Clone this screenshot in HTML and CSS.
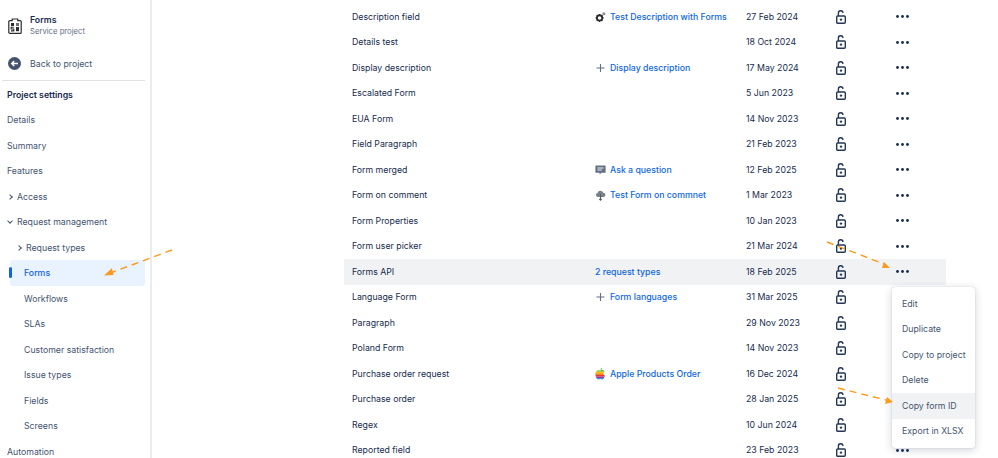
FILE: index.html
```html
<!DOCTYPE html>
<html lang="en">
<head>
  <meta charset="UTF-8" />
  <title>Forms - Project settings</title>
  <link rel="stylesheet" href="styles.css">
</head>
<body>
  <svg class="defs" width="0" height="0">
    <symbol id="lock" viewBox="0 0 10 14">
      <path d="M2.4 6V3.200a2.300 2.300 0 0 1 4.600-.3" fill="none" stroke="#253858" stroke-width="1.4"/>
      <rect x=".7" y="6" width="8.600" height="7.300" rx="1" fill="none" stroke="#253858" stroke-width="1.4"/>
      <circle cx="5" cy="9.600" r="1.200" fill="#253858"/>
    </symbol>
    <symbol id="dots" viewBox="0 0 13 3">
      <circle cx="1.500" cy="1.500" r="1.400" fill="#172b4d"/>
      <circle cx="6.500" cy="1.500" r="1.400" fill="#172b4d"/>
      <circle cx="11.500" cy="1.500" r="1.400" fill="#172b4d"/>
    </symbol>
    <symbol id="plus" viewBox="0 0 10 10">
      <path d="M5 1v8M1 5h8" stroke="#626f86" stroke-width="1.100" fill="none"/>
    </symbol>
    <clipPath id="apple-shape">
      <path d="M5.400 3.500C6.400 3 8.400 2.700 9.600 4.500 8 5.600 8.200 8 10 8.800 9.400 10.600 8.400 12.500 7.300 12.500 6.500 12.500 6.200 12 5.300 12 4.400 12 4 12.500 3.300 12.500 2 12.500.4 9.500.4 7.300.4 4.500 2.300 3 4 3.200 4.500 3.200 5 3.500 5.400 3.500z"/>
    </clipPath>
  </svg>

  <div class="page">
    <aside class="sidebar">
      <div class="project">
        <svg class="project-icon" width="14" height="16" viewBox="0 0 14 16">
          <path d="M1.800 2.600h2.400V1h5.600v1.600h2.400a1 1 0 0 1 1 1v10.800a1 1 0 0 1-1 1H1.800a1 1 0 0 1-1-1V3.600a1 1 0 0 1 1-1z" fill="#fff" stroke="#2c2c2c" stroke-width="1.200"/>
          <rect x="3" y="5" width="3" height="3" fill="#2c2c2c"/>
          <rect x="8" y="5" width="3" height="3" fill="#6b6f76"/>
          <path d="M5.800 9.200H3.200v1.800h2.600v1.900H3" fill="none" stroke="#2c2c2c" stroke-width="1.100"/>
          <rect x="8" y="9" width="3" height="4.200" fill="#2c2c2c"/>
        </svg>
        <div>
          <div class="project-name">Forms</div>
          <div class="project-type">Service project</div>
        </div>
      </div>
      <div class="back">
        <svg width="13" height="13" viewBox="0 0 13 13">
          <circle cx="6.500" cy="6.500" r="6.500" fill="#44546f"/>
          <path d="M10 6.500H4M6.200 4 3.700 6.500 6.200 9" fill="none" stroke="#fff" stroke-width="1.400"/>
        </svg>
        <span>Back to project</span>
      </div>
      <h4 class="nav-title">Project settings</h4>
      <nav class="nav">
        <div class="nav-item">Details</div>
        <div class="nav-item">Summary</div>
        <div class="nav-item">Features</div>
        <div class="nav-item toggle"><i class="chev"></i>Access</div>
        <div class="nav-item toggle"><i class="chev open"></i>Request management</div>
        <div class="nav-item toggle sub"><i class="chev"></i>Request types</div>
        <div class="nav-item child active">Forms</div>
        <div class="nav-item child">Workflows</div>
        <div class="nav-item child">SLAs</div>
        <div class="nav-item child">Customer satisfaction</div>
        <div class="nav-item child">Issue types</div>
        <div class="nav-item child">Fields</div>
        <div class="nav-item child">Screens</div>
        <div class="nav-item">Automation</div>
      </nav>
    </aside>

    <main class="content">
      <div class="row">
        <span>Description field</span>
        <a class="link"><svg class="type-icon" width="12" height="12" viewBox="0 0 12 12"><circle cx="5" cy="7" r="2.900" fill="none" stroke="#2c2c2c" stroke-width="2"/><path d="M5 2.600v1.400M5 10v1.400M.6 7H2M8 7h1.400M1.900 3.900l1 1M7.100 9.100l1 1M1.900 10.100l1-1M7.100 4.900l1-1" stroke="#2c2c2c" stroke-width="1.300"/><circle cx="9.700" cy="2.400" r="1.700" fill="#8a8f98"/></svg>Test Description with Forms</a>
        <span>27 Feb 2024</span>
        <svg class="lock"><use href="#lock"/></svg>
        <svg class="dots"><use href="#dots"/></svg>
      </div>
      <div class="row">
        <span>Details test</span>
        <span></span>
        <span>18 Oct 2024</span>
        <svg class="lock"><use href="#lock"/></svg>
        <svg class="dots"><use href="#dots"/></svg>
      </div>
      <div class="row">
        <span>Display description</span>
        <a class="link"><svg class="type-icon" width="10" height="10"><use href="#plus"/></svg>Display description</a>
        <span>17 May 2024</span>
        <svg class="lock"><use href="#lock"/></svg>
        <svg class="dots"><use href="#dots"/></svg>
      </div>
      <div class="row">
        <span>Escalated Form</span>
        <span></span>
        <span>5 Jun 2023</span>
        <svg class="lock"><use href="#lock"/></svg>
        <svg class="dots"><use href="#dots"/></svg>
      </div>
      <div class="row">
        <span>EUA Form</span>
        <span></span>
        <span>14 Nov 2023</span>
        <svg class="lock"><use href="#lock"/></svg>
        <svg class="dots"><use href="#dots"/></svg>
      </div>
      <div class="row">
        <span>Field Paragraph</span>
        <span></span>
        <span>21 Feb 2023</span>
        <svg class="lock"><use href="#lock"/></svg>
        <svg class="dots"><use href="#dots"/></svg>
      </div>
      <div class="row">
        <span>Form merged</span>
        <a class="link"><svg class="type-icon" width="11" height="10" viewBox="0 0 11 10"><path d="M1 .6h9a.6.6 0 0 1 .6.6v6a.6.6 0 0 1-.6.6H6.400L4.600 9.600V7.800H1a.6.6 0 0 1-.6-.6v-6A.6.6 0 0 1 1 .6z" fill="#626f86"/><path d="M2.400 3h6.200M2.400 5h4.400" stroke="#fff" stroke-width=".9"/></svg>Ask a question</a>
        <span>12 Feb 2025</span>
        <svg class="lock"><use href="#lock"/></svg>
        <svg class="dots"><use href="#dots"/></svg>
      </div>
      <div class="row">
        <span>Form on comment</span>
        <a class="link"><svg class="type-icon" width="12" height="11" viewBox="0 0 12 11"><path d="M3 7.200a2.300 2.300 0 0 1-.3-4.500A3.400 3.400 0 0 1 9 2.400a2.400 2.400 0 0 1 0 4.800z" fill="#7a808a"/><path d="M6 4.500V10.600M4.600 9.200 6 10.600l1.400-1.400" fill="none" stroke="#55595f" stroke-width="1.100"/></svg>Test Form on commnet</a>
        <span>1 Mar 2023</span>
        <svg class="lock"><use href="#lock"/></svg>
        <svg class="dots"><use href="#dots"/></svg>
      </div>
      <div class="row">
        <span>Form Properties</span>
        <span></span>
        <span>10 Jan 2023</span>
        <svg class="lock"><use href="#lock"/></svg>
        <svg class="dots"><use href="#dots"/></svg>
      </div>
      <div class="row">
        <span>Form user picker</span>
        <span></span>
        <span>21 Mar 2024</span>
        <svg class="lock"><use href="#lock"/></svg>
        <svg class="dots"><use href="#dots"/></svg>
      </div>
      <div class="row selected">
        <span>Forms API</span>
        <a class="link plain">2 request types</a>
        <span>18 Feb 2025</span>
        <svg class="lock"><use href="#lock"/></svg>
        <svg class="dots"><use href="#dots"/></svg>
      </div>
      <div class="row">
        <span>Language Form</span>
        <a class="link"><svg class="type-icon" width="10" height="10"><use href="#plus"/></svg>Form languages</a>
        <span>31 Mar 2025</span>
        <svg class="lock"><use href="#lock"/></svg>
        <svg class="dots"><use href="#dots"/></svg>
      </div>
      <div class="row">
        <span>Paragraph</span>
        <span></span>
        <span>29 Nov 2023</span>
        <svg class="lock"><use href="#lock"/></svg>
        <svg class="dots"><use href="#dots"/></svg>
      </div>
      <div class="row">
        <span>Poland Form</span>
        <span></span>
        <span>14 Nov 2023</span>
        <svg class="lock"><use href="#lock"/></svg>
        <svg class="dots"><use href="#dots"/></svg>
      </div>
      <div class="row">
        <span>Purchase order request</span>
        <a class="link"><svg class="type-icon" width="11" height="13" viewBox="0 0 11 13"><path d="M5.300 3Q5.500 1 7.400.5 7.300 2.600 5.300 3z" fill="#5ebd3e"/><g clip-path="url(#apple-shape)"><rect y="2" width="11" height="2.700" fill="#5ebd3e"/><rect y="4.700" width="11" height="1.600" fill="#ffb900"/><rect y="6.300" width="11" height="1.600" fill="#f78200"/><rect y="7.900" width="11" height="1.600" fill="#e23838"/><rect y="9.500" width="11" height="1.500" fill="#973999"/><rect y="11" width="11" height="2" fill="#3f8fe0"/></g></svg>Apple Products Order</a>
        <span>16 Dec 2024</span>
        <svg class="lock"><use href="#lock"/></svg>
        <svg class="dots"><use href="#dots"/></svg>
      </div>
      <div class="row">
        <span>Purchase order</span>
        <span></span>
        <span>28 Jan 2025</span>
        <svg class="lock"><use href="#lock"/></svg>
        <svg class="dots"><use href="#dots"/></svg>
      </div>
      <div class="row">
        <span>Regex</span>
        <span></span>
        <span>10 Jun 2024</span>
        <svg class="lock"><use href="#lock"/></svg>
        <svg class="dots"><use href="#dots"/></svg>
      </div>
      <div class="row">
        <span>Reported field</span>
        <span></span>
        <span>23 Feb 2023</span>
        <svg class="lock"><use href="#lock"/></svg>
        <svg class="dots"><use href="#dots"/></svg>
      </div>
    </main>

    <div class="menu">
      <div class="menu-item">Edit</div>
      <div class="menu-item">Duplicate</div>
      <div class="menu-item">Copy to project</div>
      <div class="menu-item">Delete</div>
      <div class="menu-item hover">Copy form ID</div>
      <div class="menu-item">Export in XLSX</div>
    </div>

    <!-- hand drawn annotation arrows -->
    <svg class="arrows" width="998" height="458" viewBox="0 0 998 458">
      <g fill="none" stroke="#fb9a1c" stroke-width="1.400" stroke-dasharray="7 5">
        <path d="M172 250 113 272"/>
        <path d="M827 242 884 264"/>
        <path d="M838 388 886 400"/>
      </g>
      <g fill="#fb9a1c">
        <path d="M104 275.500 112 268 113.500 275z"/>
        <path d="M890 268 882 268 884 262z"/>
        <path d="M893 402 885 404 887 397z"/>
      </g>
    </svg>
  </div>
</body>
</html>
```

FILE: styles.css
```css
* {
  box-sizing: border-box;
}
html, body {
  margin: 0;
  height: 458px;
  overflow: hidden;
  background: #fff;
}
body {
  font-family: Inter, "Liberation Sans", sans-serif;
  font-size: 8.75px;
  color: #172b4d;
}
.defs {
  position: absolute;
}
.page {
  position: relative;
  display: flex;
  height: 458px;
  overflow: hidden;
}

/* sidebar */
.sidebar {
  flex: 0 0 152px;
  height: 458px;
  padding: 0 5px 0 2px;
  border-right: 2px solid #ebecf0;
  color: #44546f;
}
.project {
  display: flex;
  align-items: center;
  gap: 8px;
  height: 26px;
  margin-top: 13px;
  padding-left: 6px;
}
.project-icon {
  flex: none;
}
.project-name {
  font-weight: 600;
  color: #172b4d;
  line-height: 11px;
}
.project-type {
  font-size: 7.7px;
  line-height: 11px;
  color: #626f86;
}
.back {
  display: flex;
  align-items: center;
  gap: 9px;
  height: 26px;
  margin-top: 12px;
  padding-left: 6px;
  padding-bottom: 1px;
}
.nav-title {
  margin: 3px 0 0;
  padding: 8px 0 0 5px;
  height: 27px;
  border-top: 1px solid #dfe1e6;
  font-size: 8.75px;
  font-weight: 600;
  line-height: 12px;
  color: #172b4d;
}
.nav-item {
  display: flex;
  align-items: center;
  height: 25.5px;
  padding-top: 1px;
  padding-left: 5px;
}
.nav-item.toggle {
  padding-left: 6px;
}
.nav-item.sub {
  padding-left: 15px;
}
.nav-item.child {
  padding-left: 22px;
}
.nav-item.active {
  position: relative;
  margin-left: 8px;
  padding-left: 14px;
  background: #e9f2ff;
  border-radius: 3px;
  color: #0c66e4;
  font-weight: 500;
}
.nav-item.active::before {
  content: "";
  position: absolute;
  left: -1px;
  top: 7px;
  width: 3px;
  height: 11px;
  border-radius: 2px;
  background: #0c66e4;
}
.chev {
  flex: none;
  width: 4px;
  height: 4px;
  margin: 0 5px 0 0;
  border-top: 1.3px solid #44546f;
  border-right: 1.3px solid #44546f;
  transform: rotate(45deg);
}
.chev.open {
  transform: rotate(135deg);
  margin-top: -2px;
}

/* forms table */
.content {
  margin-left: 192px;
  width: 602px;
  flex: none;
  padding-top: 4px;
}
.row {
  display: grid;
  grid-template-columns: 243px 151px 90px 60px 1fr;
  align-items: center;
  height: 25.5px;
  padding-left: 8px;
}
.row.selected {
  background: #f1f2f4;
}
.link {
  display: flex;
  align-items: center;
  color: #0c66e4;
  font-weight: 500;
}
.type-icon {
  flex: none;
  margin-right: 4px;
  width: 11px;
}
.lock {
  width: 10px;
  height: 14px;
}
.dots {
  width: 13px;
  height: 3px;
}

/* actions menu */
.menu {
  position: absolute;
  left: 892px;
  top: 287px;
  width: 83px;
  padding: 4px 0;
  background: #fff;
  border-radius: 3px;
  box-shadow: 0 2px 8px rgba(9, 30, 66, 0.2), 0 0 1px rgba(9, 30, 66, 0.3);
}
.menu-item {
  display: flex;
  align-items: center;
  height: 25.5px;
  padding-left: 10px;
  color: #44546f;
  white-space: nowrap;
}
.menu-item.hover {
  background: #f1f2f4;
}
.arrows {
  position: absolute;
  left: 0;
  top: 0;
  pointer-events: none;
}
```
